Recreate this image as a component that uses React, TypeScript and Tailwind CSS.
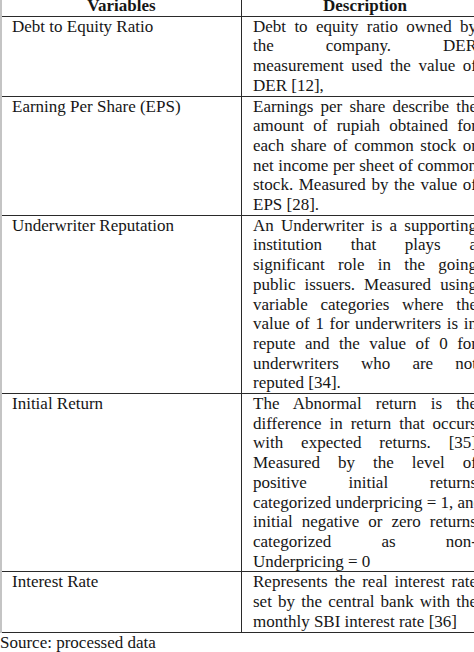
const ROWS: { name: string; lines: string[] }[] = [
  {
    name: "Debt to Equity Ratio",
    lines: [
      "Debt to equity ratio owned by",
      "the company. DER",
      "measurement used the value of",
      "DER [12],",
    ],
  },
  {
    name: "Earning Per Share (EPS)",
    lines: [
      "Earnings per share describe the",
      "amount of rupiah obtained for",
      "each share of common stock or",
      "net income per sheet of common",
      "stock. Measured by the value of",
      "EPS [28].",
    ],
  },
  {
    name: "Underwriter Reputation",
    lines: [
      "An Underwriter is a supporting",
      "institution that plays a",
      "significant role in the going",
      "public issuers. Measured using",
      "variable categories where the",
      "value of 1 for underwriters is in",
      "repute and the value of 0 for",
      "underwriters who are not",
      "reputed [34].",
    ],
  },
  {
    name: "Initial Return",
    lines: [
      "The Abnormal return is the",
      "difference in return that occurs",
      "with expected returns. [35]",
      "Measured by the level of",
      "positive initial returns",
      "categorized underpricing = 1, and",
      "initial negative or zero returns",
      "categorized as non-",
      "Underpricing = 0",
    ],
  },
  {
    name: "Interest Rate",
    lines: [
      "Represents the real interest rate",
      "set by the central bank with the",
      "monthly SBI interest rate [36]",
    ],
  },
]

// each description line is set on its own, justified except the last one
function Description({ lines }: { lines: string[] }) {
  return (
    <div className="w-[241px] shrink-0 pl-[11px] pr-[6px]">
      {lines.map((line, i) => (
        <div
          key={i}
          className={`whitespace-nowrap ${
            i < lines.length - 1 ? "text-justify [text-align-last:justify]" : "text-left"
          }`}
        >
          {line}
        </div>
      ))}
    </div>
  )
}

export default function App() {
  return (
    <div className="w-[474px] h-[652px] overflow-hidden bg-white text-[#161616] font-['Liberation_Serif',_'Times_New_Roman',_serif] text-[17px] leading-[19.7px]">
      {/* Table */}
      <div className="mt-[-4px] w-[484px] border-l-2 border-l-[#c4c4c4]">
        <div className="flex border-b border-b-[#2a2a2a] font-bold">
          <div className="w-[240px] shrink-0 border-r border-r-[#2a2a2a] text-center">Variables</div>
          <div className="w-[241px] shrink-0 pl-[11px] pr-[6px] text-center">Description</div>
        </div>

        {ROWS.map((row) => (
          <div key={row.name} className="flex border-b border-b-[#2a2a2a]">
            <div className="w-[240px] shrink-0 border-r border-r-[#2a2a2a] pl-[10px]">{row.name}</div>
            <Description lines={row.lines} />
          </div>
        ))}
      </div>

      <p className="whitespace-nowrap">Source: processed data</p>
    </div>
  )
}
